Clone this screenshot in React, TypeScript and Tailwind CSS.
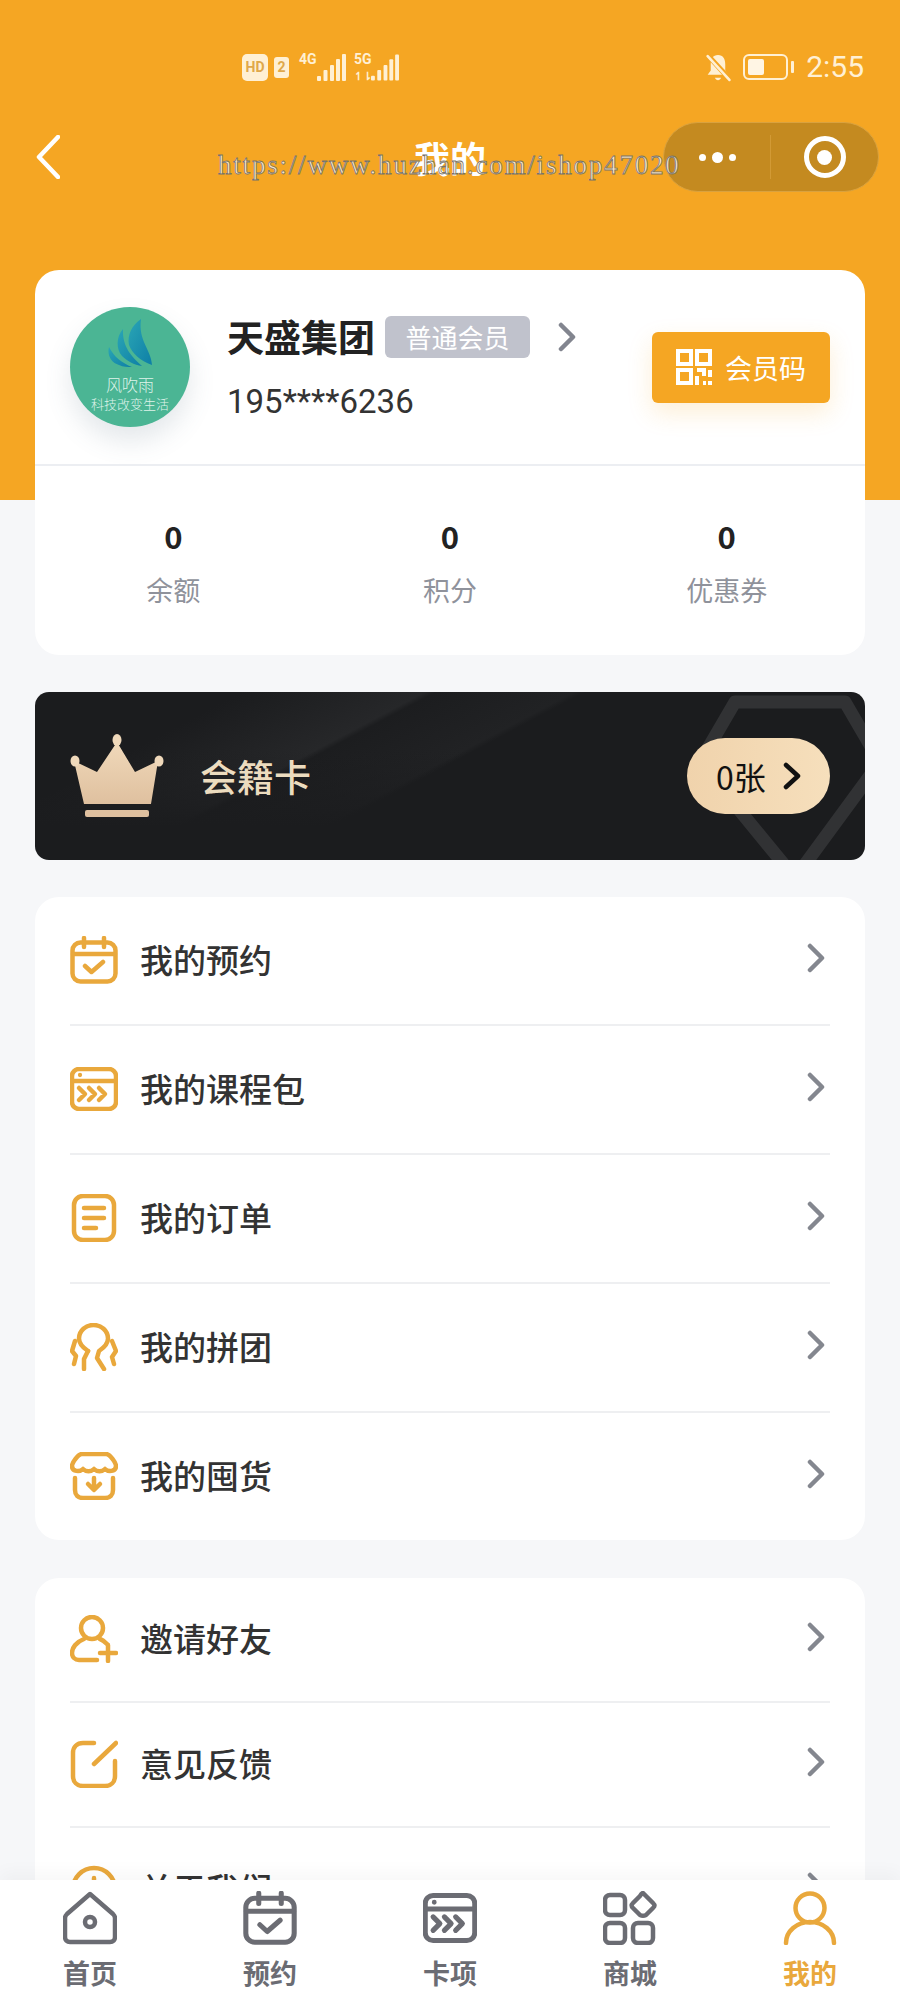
const Calendar = ({ className }: { className: string }) => (
  <svg viewBox="0 0 48 48" fill="none" stroke="currentColor" strokeWidth="4.500" strokeLinecap="round" strokeLinejoin="round" className={className}>
    <rect x="2.500" y="6.500" width="43" height="39" rx="8" />
    <path d="M3 18H45M14 2V11M34 2V11M15 30L21.500 36L33 26" />
  </svg>
);

const CardPack = ({ className }: { className: string }) => (
  <svg viewBox="0 0 48 44" fill="none" stroke="currentColor" strokeWidth="4.500" strokeLinecap="round" strokeLinejoin="round" className={className}>
    <rect x="2" y="2" width="44" height="40" rx="7" />
    <path d="M3 14H45" />
    <circle cx="10" cy="8" r="1.400" fill="currentColor" strokeWidth="1.500" />
    <path d="M9 21L15 27L9 33M19 21L25 27L19 33M29 21L35 27L29 33" />
  </svg>
);

const Order = ({ className }: { className: string }) => (
  <svg viewBox="0 0 48 48" fill="none" stroke="currentColor" strokeWidth="4.500" strokeLinecap="round" strokeLinejoin="round" className={className}>
    <rect x="4" y="2" width="40" height="44" rx="9" />
    <path d="M14 14H34M14 24H34M14 34H26" />
  </svg>
);

const Group = ({ className }: { className: string }) => (
  <svg viewBox="0 0 48 48" fill="none" stroke="currentColor" strokeWidth="4.500" strokeLinecap="round" strokeLinejoin="round" className={className}>
    <path d="M18 28C12 24 9 20 9 15.500C9 7.500 16 2 23.500 2C31 2 38 7.500 38 15.500C38 20 35 24 29 28L27 35L34 46" />
    <path d="M18 28L14 36L14 46M5 18L2 28L6 33L4 41M42 18L46 28L42 34L44 41" />
  </svg>
);

const Store = ({ className }: { className: string }) => (
  <svg viewBox="0 0 48 48" fill="none" stroke="currentColor" strokeWidth="4.500" strokeLinecap="round" strokeLinejoin="round" className={className}>
    <path d="M12 2H36C40 2 46 11 46 14C46 20 38 20 35 17C32 20 27 20 24 17C21 20 16 20 13 17C10 20 2 20 2 14C2 11 8 2 12 2Z" />
    <path d="M5 26V38C5 43 8 46 13 46H35C40 46 43 43 43 38V26" />
    <path d="M24 26V36M18 32L24 38L30 32" />
  </svg>
);

const Invite = ({ className }: { className: string }) => (
  <svg viewBox="0 0 48 48" fill="none" stroke="currentColor" strokeWidth="4.500" strokeLinecap="round" strokeLinejoin="round" className={className}>
    <circle cx="22" cy="13" r="11" />
    <path d="M14 24C6 27 2 33 2 38C2 42 5 45 9 45H27M30 24C33 25 35 27 37 29" />
    <path d="M38 30V46M30 38H46" />
  </svg>
);

const Feedback = ({ className }: { className: string }) => (
  <svg viewBox="0 0 48 48" fill="none" stroke="currentColor" strokeWidth="4.500" strokeLinecap="round" strokeLinejoin="round" className={className}>
    <path d="M24 3H13C7 3 3 7 3 13V36C3 42 7 46 13 46H35C41 46 45 42 45 36V21" />
    <path d="M24 24L46 3" />
  </svg>
);

const Clock = ({ className }: { className: string }) => (
  <svg viewBox="0 0 48 48" fill="none" stroke="currentColor" strokeWidth="4.500" strokeLinecap="round" className={className}>
    <circle cx="24" cy="24" r="21" />
    <path d="M24 13V16M24 22V34" />
  </svg>
);

const Home = ({ className }: { className: string }) => (
  <svg viewBox="0 0 54 54" fill="none" stroke="currentColor" strokeWidth="4.500" strokeLinecap="round" strokeLinejoin="round" className={className}>
    <path d="M27 3L50 23C51 24 52 26 52 27V46C52 49 50 51 47 51H7C4 51 2 49 2 46V27C2 26 3 24 4 23Z" />
    <circle cx="27" cy="31" r="5" />
  </svg>
);

const Shop = ({ className }: { className: string }) => (
  <svg viewBox="0 0 54 54" fill="none" stroke="currentColor" strokeWidth="4.500" strokeLinejoin="round" className={className}>
    <rect x="2" y="4" width="20" height="20" rx="5" />
    <rect x="2" y="32" width="20" height="20" rx="5" />
    <rect x="30" y="32" width="20" height="20" rx="5" />
    <path d="M40 2L50 12C52 14 52 15 50 17L43 24C41 25 39 25 37 24L30 17C28 15 28 14 30 12L37 5C38 3 39 2 40 2Z" />
  </svg>
);

const Person = ({ className }: { className: string }) => (
  <svg viewBox="0 0 54 54" fill="none" stroke="currentColor" strokeWidth="4.500" strokeLinecap="round" className={className}>
    <circle cx="27" cy="17" r="14.500" />
    <path d="M3 52C3 40 14 31 27 31C40 31 51 40 51 52" />
  </svg>
);

const Chevron = ({ className }: { className: string }) => (
  <svg viewBox="0 0 20 30" fill="none" stroke="currentColor" strokeWidth="4.500" strokeLinecap="round" strokeLinejoin="round" className={className}>
    <path d="M4 3L16 15L4 27" />
  </svg>
);

const Signal = ({ className }: { className: string }) => (
  <svg viewBox="0 0 29 27" fill="currentColor" className={className}>
    <rect x="0" y="22" width="4" height="5" rx="1" />
    <rect x="6.500" y="16" width="4" height="11" rx="1" />
    <rect x="13" y="11" width="4" height="16" rx="1" />
    <rect x="19" y="5" width="4" height="22" rx="1" />
    <rect x="25" y="0" width="4" height="27" rx="1" />
  </svg>
);

const menuOne = [
  { label: "我的预约", icon: <Calendar className="w-[48px] h-[48px]" /> },
  { label: "我的课程包", icon: <CardPack className="w-[48px] h-[44px]" /> },
  { label: "我的订单", icon: <Order className="w-[48px] h-[48px]" /> },
  { label: "我的拼团", icon: <Group className="w-[48px] h-[48px]" /> },
  { label: "我的囤货", icon: <Store className="w-[48px] h-[48px]" /> },
];

const menuTwo = [
  { label: "邀请好友", icon: <Invite className="w-[48px] h-[48px]" /> },
  { label: "意见反馈", icon: <Feedback className="w-[48px] h-[48px]" /> },
  { label: "关于我们", icon: <Clock className="w-[48px] h-[48px]" /> },
];

const stats = [
  { value: "0", label: "余额" },
  { value: "0", label: "积分" },
  { value: "0", label: "优惠券" },
];

const MenuRow = ({ label, icon, last, height }: { label: string; icon: React.ReactNode; last: boolean; height: string }) => (
  <div className={last ? "mx-[35px]" : "mx-[35px] border-b-2 border-[#eeeff1]"}>
    <div className={`flex items-center pb-[2px] ${height}`}>
      <div className="w-[48px] flex justify-center text-[#e9a83c]">{icon}</div>
      <span className="ml-[22px] text-[33px] leading-none font-medium text-[#333333]">{label}</span>
      <Chevron className="ml-auto mr-[4px] mb-[3px] w-[20px] h-[30px] text-[#84878f]" />
    </div>
  </div>
);

const App = () => {
  return (
    <div className="relative w-[900px] h-[2000px] overflow-hidden bg-[#f6f7f9] font-['Noto_Sans_CJK_SC',sans-serif]">
      <header className="h-[500px] bg-[#f5a623]">
        <div className="flex items-center justify-between pt-[52px] pl-[242px] pr-[36px] text-[#fff0d4]">
          <div className="flex items-center">
            <span className="flex items-center justify-center w-[26px] h-[27px] rounded-[5px] bg-[#fff0d4] text-[#e0a84a] text-[14px] font-bold font-['Roboto',sans-serif]">HD</span>
            <span className="ml-[6px] flex items-center justify-center w-[15px] h-[21px] rounded-[3px] bg-[#fff0d4] text-[#e0a84a] text-[14px] font-bold font-['Roboto',sans-serif]">2</span>
            <div className="relative ml-[12px] w-[45px] h-[27px]">
              <span className="absolute left-[-2px] top-[-1px] text-[14px] leading-[12px] font-bold font-['Roboto',sans-serif]">4G</span>
              <Signal className="absolute right-0 top-0 w-[29px] h-[27px]" />
            </div>
            <div className="relative ml-[10px] w-[43px] h-[27px]">
              <span className="absolute left-[-2px] top-[-1px] text-[14px] leading-[12px] font-bold font-['Roboto',sans-serif]">5G</span>
              <span className="absolute left-[-2px] bottom-[-1px] text-[11px] leading-[10px] font-bold font-['Roboto',sans-serif]">↿⇂</span>
              <Signal className="absolute right-0 top-0 w-[28px] h-[27px]" />
            </div>
          </div>
          <div className="flex items-center">
            <svg viewBox="0 0 24 28" className="w-[26px] h-[29px]" fill="currentColor">
              <path d="M12 2C7 2 5 6 5 11V17L2 21H22L19 17V11C19 6 17 2 12 2Z" />
              <path d="M9 24C10 27 14 27 15 24Z" />
              <path d="M1 1L23 25" stroke="#f5a623" strokeWidth="5" />
              <path d="M2 3L23 26" stroke="currentColor" strokeWidth="2.500" strokeLinecap="round" />
            </svg>
            <div className="ml-[12px] w-[45px] h-[26px] rounded-[6px] border-2 border-current p-[3px]">
              <div className="w-[16px] h-full rounded-[2px] bg-[#fff5e4]" />
            </div>
            <div className="ml-[3px] w-[3px] h-[12px] rounded-[1px] bg-current" />
            <span className="ml-[12px] text-[30px] leading-none font-['Roboto',sans-serif]">2:55</span>
          </div>
        </div>

        <nav className="mt-[40px] px-[21px] grid grid-cols-[1fr_auto_1fr] items-center">
          <svg viewBox="0 0 24 44" fill="none" stroke="white" strokeWidth="4.500" strokeLinecap="round" strokeLinejoin="round" className="ml-[15px] w-[24px] h-[44px]">
            <path d="M22 2L3 22L22 42" />
          </svg>
          <h1 className="text-[36px] leading-none font-bold text-white">我的</h1>
          <div className="justify-self-end flex items-center w-[216px] h-[70px] rounded-full bg-[#c48a20] border border-[#d9a23f]">
            <div className="w-[106px] flex items-center justify-center gap-[6px]">
              <span className="w-[7px] h-[7px] rounded-full bg-white" />
              <span className="w-[11px] h-[11px] rounded-full bg-white" />
              <span className="w-[7px] h-[7px] rounded-full bg-white" />
            </div>
            <div className="w-px h-[44px] bg-[#d29a35]" />
            <div className="flex-1 flex items-center justify-center">
              <div className="flex items-center justify-center w-[42px] h-[42px] rounded-full border-[5px] border-white">
                <span className="w-[15px] h-[15px] rounded-full bg-white" />
              </div>
            </div>
          </div>
        </nav>
      </header>

      <main className="-mt-[230px] px-[35px] flex flex-col">
        <section className="bg-white rounded-[24px] h-[385px]">
          <div className="flex items-center h-[196px] border-b-2 border-[#eceef2] pl-[35px] pr-[35px]">
            <div className="relative w-[120px] h-[120px] rounded-full bg-[#4bb594] shadow-[0_14px_26px_rgba(90,110,130,0.16)] flex flex-col items-center overflow-hidden text-[#dff3ea]">
              <svg viewBox="0 0 44 48" className="mt-[12px] w-[44px] h-[48px]">
                <defs>
                  <linearGradient id="wing" x1="0" y1="0" x2="1" y2="1">
                    <stop offset="0" stopColor="#2aa5b5" />
                    <stop offset="1" stopColor="#0e7fa6" />
                  </linearGradient>
                </defs>
                <path d="M33 0C24 6 19 16 21 26C24 34 32 42 44 46C43 30 30 22 33 0Z" fill="url(#wing)" />
                <path d="M15 10C8 18 8 30 14 37C19 42 26 46 34 47C24 38 14 28 15 10Z" fill="url(#wing)" />
                <path d="M1 28C-1 36 3 44 11 46C15 48 20 48 24 48C14 44 6 38 1 28Z" fill="url(#wing)" />
              </svg>
              <span className="mt-[7px] text-[16px] leading-[20px] font-light">风吹雨</span>
              <span className="text-[13px] leading-[20px] font-light whitespace-nowrap">科技改变生活</span>
            </div>
            <div className="ml-[37px] mt-[5px] flex flex-col">
              <div className="flex items-center h-[42px]">
                <span className="text-[37px] leading-none font-bold text-[#222222]">天盛集团</span>
                <span className="ml-[10px] flex items-center justify-center w-[145px] h-[42px] rounded-[6px] bg-[#c0c2cc] text-[26px] leading-none text-white">普通会员</span>
                <Chevron className="ml-[27px] w-[20px] h-[30px] text-[#82858f]" />
              </div>
              <span className="mt-[22px] text-[33px] leading-[44px] text-[#333333] font-['Roboto',sans-serif]">195****6236</span>
            </div>
            <button className="ml-auto flex items-center justify-center gap-[13px] w-[178px] h-[71px] rounded-[6px] bg-[#f5a623] text-white shadow-[0_10px_24px_rgba(245,166,35,0.18)]">
              <svg viewBox="0 0 36 36" className="w-[36px] h-[36px]" fill="none" stroke="white" strokeWidth="4">
                <rect x="2" y="2" width="13" height="13" />
                <rect x="21" y="2" width="13" height="13" />
                <rect x="2" y="21" width="13" height="13" />
                <path d="M21 21H28V27M21 27V36M27 34H30M34 21V28M34 32V36" />
              </svg>
              <span className="text-[27px] leading-none">会员码</span>
            </button>
          </div>
          <div className="grid grid-cols-3 pt-[52px]">
            {stats.map((stat) => (
              <div key={stat.label} className="flex flex-col items-center">
                <span className="text-[31px] leading-[36px] font-bold text-[#222222]">{stat.value}</span>
                <span className="mt-[20px] text-[27px] leading-[32px] text-[#8f929b]">{stat.label}</span>
              </div>
            ))}
          </div>
        </section>

        <section className="relative mt-[37px] h-[168px] rounded-[14px] overflow-hidden flex items-center pl-[35px] pr-[35px] bg-[linear-gradient(180deg,transparent_35%,#1b1c1e_80%),linear-gradient(152deg,#1b1c1e_18%,#262729_34%,#1c1d1f_35%,#212224_47%,#1b1c1e_48%)]">
          <svg viewBox="0 0 170 168" fill="none" stroke="#313234" strokeWidth="13" strokeLinejoin="round" className="absolute right-0 top-0 w-[170px] h-[168px] overflow-visible">
            <path d="M40 10H150L185 70L100 186L5 70Z" />
          </svg>
          <svg viewBox="0 0 94 84" className="relative w-[94px] h-[84px]">
            <defs>
              <linearGradient id="crown" x1="0" y1="0" x2="0" y2="1">
                <stop offset="0" stopColor="#f0d9ba" />
                <stop offset="1" stopColor="#dfc09f" />
              </linearGradient>
            </defs>
            <path d="M47 8L65 38L88 27L81 70H14L4 27L27 38Z" fill="url(#crown)" />
            <ellipse cx="47" cy="6" rx="4.500" ry="6" fill="#efd8ba" />
            <ellipse cx="5" cy="27" rx="4.500" ry="5.500" fill="#efd8ba" />
            <ellipse cx="89" cy="27" rx="4.500" ry="5.500" fill="#efd8ba" />
            <rect x="15" y="76" width="64" height="7" rx="2" fill="#dfc09f" />
          </svg>
          <span className="relative ml-[36px] text-[37px] leading-none font-medium text-[#ecdcbf]">会籍卡</span>
          <div className="relative ml-auto flex items-center justify-center gap-[17px] w-[143px] h-[76px] rounded-full bg-[linear-gradient(90deg,#f0d3ac,#f6dfbc)] text-[#111111]">
            <span className="text-[32px] leading-none">0张</span>
            <svg viewBox="0 0 18 28" fill="none" stroke="currentColor" strokeWidth="4.500" strokeLinecap="round" strokeLinejoin="round" className="w-[18px] h-[28px]">
              <path d="M3 3L15 14L3 25" />
            </svg>
          </div>
        </section>

        <section className="mt-[37px] bg-white rounded-[24px]">
          {menuOne.map((item, i) => (
            <MenuRow key={item.label} label={item.label} icon={item.icon} last={i === menuOne.length - 1} height="h-[127px]" />
          ))}
        </section>

        <section className="mt-[38px] bg-white rounded-[24px]">
          {menuTwo.map((item, i) => (
            <MenuRow key={item.label} label={item.label} icon={item.icon} last={i === menuTwo.length - 1} height="h-[123px]" />
          ))}
        </section>
      </main>

      <footer className="absolute left-0 right-0 bottom-0 h-[120px] bg-white grid grid-cols-5 pt-[11px] shadow-[0_-8px_16px_rgba(0,0,0,0.03)]">
        <div className="flex flex-col items-center text-[#6b6c73]">
          <Home className="w-[54px] h-[54px]" />
          <span className="mt-[12px] text-[27px] leading-[32px] font-bold">首页</span>
        </div>
        <div className="flex flex-col items-center text-[#6b6c73]">
          <Calendar className="w-[54px] h-[54px]" />
          <span className="mt-[12px] text-[27px] leading-[32px] font-bold">预约</span>
        </div>
        <div className="flex flex-col items-center text-[#6b6c73]">
          <CardPack className="w-[54px] h-[54px]" />
          <span className="mt-[12px] text-[27px] leading-[32px] font-bold">卡项</span>
        </div>
        <div className="flex flex-col items-center text-[#6b6c73]">
          <Shop className="w-[54px] h-[54px]" />
          <span className="mt-[12px] text-[27px] leading-[32px] font-bold">商城</span>
        </div>
        <div className="flex flex-col items-center text-[#e9a83c]">
          <Person className="w-[54px] h-[54px]" />
          <span className="mt-[12px] text-[27px] leading-[32px] font-bold">我的</span>
        </div>
      </footer>

      <span className="absolute left-[218px] top-[149px] text-[27px] leading-[32px] whitespace-nowrap tracking-[1.8px] text-[#ffffffc0] [-webkit-text-stroke:0.8px_#77736a] font-['Liberation_Serif',serif]">
        https://www.huzhan.com/ishop47020
      </span>
    </div>
  );
};

export default App;
